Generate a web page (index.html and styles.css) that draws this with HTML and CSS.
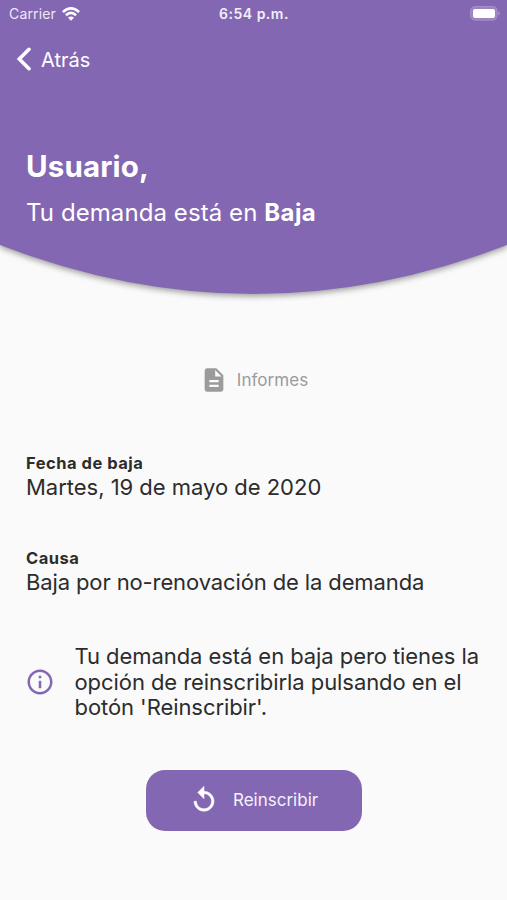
FILE: index.html
```html
<!DOCTYPE html>
<html lang="es">
<head>
<meta charset="utf-8">
<meta name="viewport" content="width=device-width, initial-scale=1">
<title>Demanda</title>
<link rel="stylesheet" href="styles.css">
</head>
<body>
<header class="hero">
  <svg class="hero-shape" viewBox="0 0 507 310" aria-hidden="true"><path d="M0 0H507V245Q253.500 343 0 245Z"/></svg>
  <div class="hero-content">
    <div class="status">
      <div class="carrier"><span>Carrier</span>
        <svg width="18" height="14" viewBox="0 0 18 14" fill="none" stroke="#fff" stroke-width="2.600"><path d="M.9 5.100Q9-2.300 17.100 5.100M3.900 8.200Q9 3.600 14.100 8.200"/><path d="M9 13.800L6 10.800Q9 8.300 12 10.800Z" fill="#fff" stroke="none"/></svg>
      </div>
      <div class="time">6:54 p.m.</div>
      <svg class="battery" width="31" height="15" viewBox="0 0 31 15"><rect x=".6" y=".6" width="26.500" height="13.500" rx="4.300" fill="#9b82c0" stroke="#a892c8"/><rect x="3" y="3" width="22" height="9" rx="2" fill="#fff"/><path d="M28.500 5.200Q31 7.300 28.500 9.500Z" fill="#b4a0d0"/></svg>
    </div>
    <a class="back">
      <svg width="16" height="24" viewBox="0 0 16 24" fill="none" stroke="#fff" stroke-width="3.600" stroke-linecap="round" stroke-linejoin="miter"><path d="M13 2.300L3.300 12L13 21.700"/></svg>
      <span>Atrás</span>
    </a>
    <h1>Usuario,</h1>
    <p class="state">Tu demanda está en <b>Baja</b></p>
  </div>
</header>
<main>
  <div class="reports">
    <svg width="28" height="28" viewBox="0 0 24 24" fill="#9b9b9b"><path d="M14 2H6c-1.100 0-1.990.9-1.990 2L4 20c0 1.100.89 2 1.990 2H18c1.100 0 2-.9 2-2V8l-6-6zm2 16H8v-2h8v2zm0-4H8v-2h8v2zm-3-5V3.500L18.500 9H13z"/></svg>
    <span>Informes</span>
  </div>
  <section class="field date"><h2>Fecha de baja</h2><p>Martes, 19 de mayo de 2020</p></section>
  <section class="field cause"><h2>Causa</h2><p>Baja por no-renovación de la demanda</p></section>
  <div class="notice">
    <svg width="30" height="30" viewBox="0 0 24 24" fill="#8467b2"><path d="M11 7h2v2h-2zm0 4h2v6h-2zm1-9C6.480 2 2 6.480 2 12s4.480 10 10 10 10-4.480 10-10S17.520 2 12 2zm0 18c-4.410 0-8-3.590-8-8s3.590-8 8-8 8 3.590 8 8-3.590 8-8 8z"/></svg>
    <p>Tu demanda está en baja pero tienes la<br>opción de reinscribirla pulsando en el<br>botón 'Reinscribir'.</p>
  </div>
  <button class="again">
    <svg width="30" height="30" viewBox="0 0 24 24" fill="#fff" stroke="#fff" stroke-width=".4"><path d="M12 5V1L7 6l5 5V7c3.310 0 6 2.690 6 6s-2.690 6-6 6-6-2.690-6-6H4c0 4.420 3.580 8 8 8s8-3.580 8-8-3.580-8-8-8z"/></svg>
    <span>Reinscribir</span>
  </button>
</main>
</body>
</html>
```
FILE: styles.css
```css
* { box-sizing: border-box; }
body { margin: 0; height: 900px; overflow: hidden; background: #fafafa; color: #2c2c2c; font-family: Inter, "Liberation Sans", sans-serif; }
h1, h2, p { margin: 0; white-space: nowrap; }
svg { display: block; flex: none; }
.hero { display: grid; height: 310px; color: #fff; }
.hero-shape, .hero-content { grid-area: 1 / 1; }
.hero-shape { width: 507px; height: 310px; fill: #8467b2; filter: drop-shadow(0 2px 3px rgba(0,0,0,.4)); overflow: visible; }
.hero-content { position: relative; }
.status { display: grid; grid-template-columns: 1fr auto 1fr; align-items: center; height: 27px; padding: 0 6px 0 9px; font-size: 14px; }
.carrier { display: flex; align-items: center; gap: 6px; color: #eee8f5; letter-spacing: .15px; }
.time { font-weight: 600; letter-spacing: .5px; color: #f3eff8; margin-left: -2px; }
.battery { justify-self: end; }
.back { display: flex; align-items: center; gap: 9px; height: 64px; padding-left: 16px; font-size: 20px; }
.back span { padding-top: 1px; }
h1 { margin-top: 56px; padding-left: 26px; font-size: 29.500px; line-height: 38px; font-weight: 700; letter-spacing: .15px; }
.state { margin-top: 12px; padding-left: 26px; font-size: 24px; line-height: 32px; letter-spacing: .08px; }
.state b { font-weight: 700; letter-spacing: .4px; }
.reports { display: flex; align-items: center; justify-content: center; gap: 9px; margin-top: 55px; padding-left: 1px; height: 30px; color: #9b9b9b; font-size: 17px; letter-spacing: .05px; }
.field { padding-left: 26px; }
.field h2 { font-size: 16.500px; line-height: 22px; font-weight: 700; letter-spacing: .5px; }
.field p { font-size: 22px; line-height: 26px; letter-spacing: -.02px; }
.date { margin-top: 57px; }
.cause { margin-top: 47px; }
.cause p { letter-spacing: -.12px; }
.notice { display: flex; align-items: center; gap: 19.500px; margin-top: 49px; padding-left: 25px; font-size: 22px; line-height: 25.500px; letter-spacing: -.07px; }
.again { display: flex; align-items: center; gap: 14px; width: 216px; height: 61px; margin: 49px 0 0 146px; padding: 0 0 0 43px; border: 0; border-radius: 19px; background: #8467b2; color: #f6f0ff; font: 17px Inter, "Liberation Sans", sans-serif; letter-spacing: 0; }
```
